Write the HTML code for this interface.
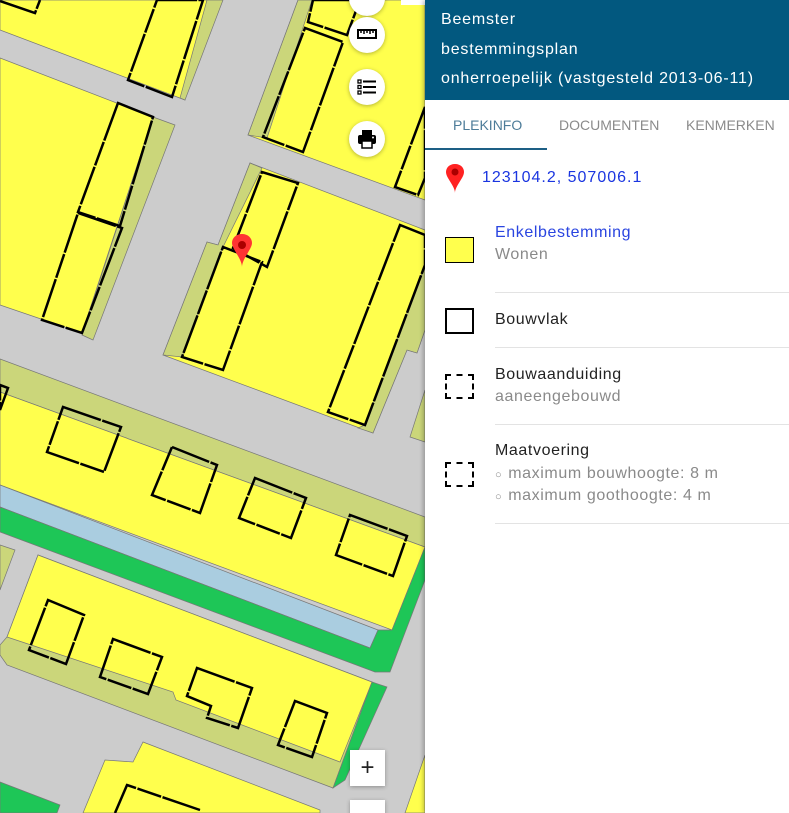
<!DOCTYPE html>
<html><head><meta charset="utf-8"><style>
html,body{margin:0;padding:0;width:789px;height:813px;overflow:hidden;font-family:"Liberation Sans",sans-serif;background:#fff}
#map{position:absolute;left:0;top:0;width:425px;height:813px;background:#cccccc;overflow:hidden}
.btn{position:absolute;left:349px;width:36px;height:36px;border-radius:50%;background:#fff;box-shadow:0 1px 4px rgba(0,0,0,.3)}
.zb{position:absolute;left:350px;width:35px;height:36px;background:#fff;box-shadow:0 1px 4px rgba(0,0,0,.3);font-size:24px;text-align:center;line-height:35px;color:#222}
#panel{position:absolute;left:425px;top:0;width:364px;height:813px;background:#fff;box-shadow:-2px 0 4px rgba(0,0,0,.25)}
#hdr{background:#02587f;height:100px;color:#fff;font-size:16px;letter-spacing:0.8px;box-sizing:border-box}
#hdr div{position:absolute;left:16px}
.tab{position:absolute;top:117px;font-size:14px;color:#8a8a8a}
.t{position:absolute;left:70px;font-size:16px;letter-spacing:0.6px}
.sep{position:absolute;left:70px;right:0;height:1px;background:#e3e3e3}
.sw{position:absolute;left:20px;width:27px;height:24px;box-sizing:border-box}
</style></head><body>
<div id="map">
<svg width="425" height="813" viewBox="0 0 425 813" xmlns="http://www.w3.org/2000/svg">
<g stroke="#777" stroke-width="0.7">
<polygon fill="#ffff4d" points="0,0 207,0 185,100 0,30"/>
<polygon fill="#cbd67a" points="207,0 223,0 185,100 180,98"/>
<polygon fill="#ffff4d" points="0,58 153,117 82,333 0,305"/>
<polygon fill="#cbd67a" points="153,117 175,125 93,340 82,335"/>
<polygon fill="#ffff4d" points="298,0 425,0 425,200 248,135"/>
<polygon fill="#cbd67a" points="298,0 312,0 267,138 248,135"/>
<polygon fill="#ffff4d" points="250,163 425,230 425,330 417,353 407,350 373,433 163,355 207,242 218,245"/>
<polygon fill="#cbd67a" points="250,163 262,168 223,247 182,357 163,355 207,242 218,245"/>
<polygon fill="#cbd67a" points="425,265 425,330 417,353 407,350 373,433 358,428 365,425"/>
<polygon fill="#cbd67a" points="410,437 425,390 425,442"/>
<polygon fill="#cbd67a" points="0,359 425,517 425,547 0,392"/>
<polygon fill="#ffff4d" points="0,392 425,547 392,630 0,485"/>
<polygon fill="#aacde0" points="0,485 378,630 370,648 0,507"/>
<polygon fill="#1ec657" points="0,507 370,648 378,630 392,630 425,547 425,580 390,672 375,672 0,532"/>
<polygon fill="#cbd67a" points="0,545 15,550 0,590"/>
<polygon fill="#cbd67a" points="38,555 372,682 333,788 7,665 0,655 0,645 7,637"/>
<polygon fill="#ffff4d" points="38,555 372,682 340,762 176,700 173,692 7,637"/>
<polygon fill="#1ec657" points="372,682 387,687 345,780 333,788"/>
<polygon fill="#ffff4d" points="143,742 320,810 320,813 83,813 105,760 133,762"/>
<polygon fill="#1ec657" points="0,782 60,805 57,813 0,813"/>
<polygon fill="#ffff4d" points="425,755 425,813 405,813"/>
</g>
<g fill="none" stroke="#000" stroke-width="2.5" stroke-dasharray="40 1.5 25 1.5">
<polyline points="0,1 35,13 40,0"/>
<polygon points="157,0 203,0 172,97 128,80"/>
<polygon points="118,103 153,117 120,226 78,212"/>
<polygon points="78,213 122,228 82,333 42,320"/>
<polygon points="313,0 360,0 347,35 308,22"/>
<polygon points="305,28 343,42 303,152 263,137"/>
<polygon points="425,107 395,187 418,195 425,178"/>
<polygon points="262,172 298,183 267,267 233,248"/>
<polygon points="223,247 262,262 223,370 182,357"/>
<polygon points="400,225 425,235 425,265 365,425 328,412"/>
<polygon points="0,385 8,388 0,410"/>
<polygon points="63,407 121,427 104,472 47,452"/>
<polygon points="172,447 217,465 200,513 152,495"/>
<polygon points="255,478 306,498 291,538 239,518"/>
<polygon points="350,515 407,536 393,576 336,555"/>
<polygon points="48,600 84,615 66,664 29,650"/>
<polygon points="113,639 162,657 148,694 100,677"/>
<polygon points="197,668 252,688 238,728 207,718 211,706 187,696"/>
<polygon points="295,701 327,713 312,757 278,745"/>
<polyline points="115,813 127,785 200,810"/>
</g>
<path d="M242,234 c-6,0 -10,4 -10,9 c0,6 10,16 10,24 c0,-8 10,-18 10,-24 c0,-5 -4,-9 -10,-9z" fill="#f33"/>
<circle cx="242" cy="245" r="4" fill="#a00"/>
</svg>
<div style="position:absolute;left:401px;top:0;width:24px;height:5px;background:#fff"></div>
<div class="btn" style="top:-20px"></div>
<div class="btn" style="top:17px"><svg width="36" height="36"><rect x="9" y="13" width="18" height="8" fill="none" stroke="#000" stroke-width="2"/><path d="M12 13v3M15 13v4M18 13v3M21 13v4M24 13v3" stroke="#000" stroke-width="1.5"/></svg></div>
<div class="btn" style="top:69px"><svg width="36" height="36"><g fill="none" stroke="#000" stroke-width="1.3"><rect x="9" y="11" width="3" height="3"/><rect x="9" y="16.5" width="3" height="3"/><rect x="9" y="22" width="3" height="3"/></g><path d="M14 12.5h13M14 18h13M14 23.5h13" stroke="#000" stroke-width="2"/></svg></div>
<div class="btn" style="top:121px"><svg width="36" height="36"><rect x="13" y="9" width="10" height="5" fill="#000"/><rect x="9" y="14" width="18" height="9" rx="2" fill="#000"/><rect x="13" y="20" width="10" height="7" fill="#fff" stroke="#000" stroke-width="1.5"/><circle cx="24" cy="16.5" r="1" fill="#fff"/></svg></div>
<div class="zb" style="top:750px">+</div>
<div class="zb" style="top:800px"></div>
</div>
<div id="panel">
<div id="hdr">
<div style="top:11px">Beemster</div>
<div style="top:41px">bestemmingsplan</div>
<div style="top:70px">onherroepelijk (vastgesteld 2013-06-11)</div>
</div>
<div class="tab" style="left:28px;color:#4d7c99">PLEKINFO</div>
<div class="tab" style="left:134px">DOCUMENTEN</div>
<div class="tab" style="left:261px">KENMERKEN</div>
<div style="position:absolute;left:0;top:148px;width:122px;height:2px;background:#1d5f85"></div>
<svg style="position:absolute;left:19px;top:163px" width="22" height="30"><path d="M11,1 c-6,0 -9,4 -9,8 c0,6 9,14 9,21 c0,-7 9,-15 9,-21 c0,-4 -3,-8 -9,-8z" fill="#f22"/><circle cx="11" cy="9" r="3.5" fill="#a00"/></svg>
<div class="t" style="left:57px;top:169px;color:#1a35e0;letter-spacing:1px">123104.2, 507006.1</div>
<div class="sw" style="top:237px;width:29px;height:26px;border:1.5px solid #000;background:#ffff4d"></div>
<div class="t" style="top:224px;color:#2a45e0">Enkelbestemming</div>
<div class="t" style="top:246px;color:#8a8a8a">Wonen</div>
<div class="sep" style="top:292px"></div>
<div class="sw" style="top:308px;width:29px;height:26px;border:2px solid #000"></div>
<div class="t" style="top:311px;color:#222">Bouwvlak</div>
<div class="sep" style="top:347px"></div>
<div class="sw" style="top:374px;width:29px;height:25px;border:2px dashed #000"></div>
<div class="t" style="top:366px;color:#222">Bouwaanduiding</div>
<div class="t" style="top:388px;color:#8a8a8a">aaneengebouwd</div>
<div class="sep" style="top:424px"></div>
<div class="sw" style="top:462px;width:29px;height:25px;border:2px dashed #000"></div>
<div class="t" style="top:442px;color:#222">Maatvoering</div>
<div class="t" style="top:465px;color:#8a8a8a"><span style="font-size:11px;margin-right:6px">○</span>maximum bouwhoogte: 8 m</div>
<div class="t" style="top:487px;color:#8a8a8a"><span style="font-size:11px;margin-right:6px">○</span>maximum goothoogte: 4 m</div>
<div class="sep" style="top:523px"></div>
</div>
</body></html>
